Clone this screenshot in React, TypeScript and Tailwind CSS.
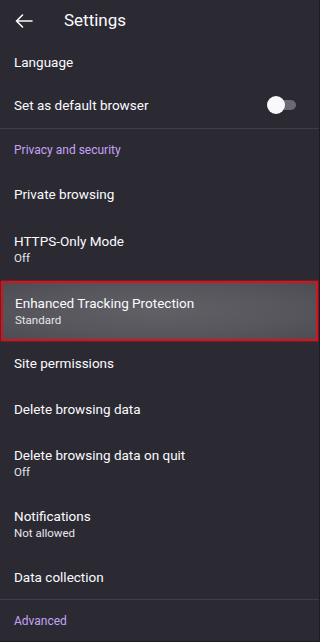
import React from "react";

const font = { fontFamily: "Roboto, 'Open Sans', sans-serif" };

function Row({ title, sub, h }: { title: string; sub?: string; h: string }) {
  return (
    <div className={`flex flex-col justify-center px-[14px] ${h}`}>
      <div className="text-[13.5px] leading-[16px] text-[#fbfbfe]">{title}</div>
      {sub && <div className="text-[11.5px] leading-[14px] text-[#e6e6ea] mt-[2px]">{sub}</div>}
    </div>
  );
}

export default function App() {
  return (
    <div className="w-[320px] h-[642px] bg-[#2b2a33] overflow-hidden flex flex-col border-r border-b border-[#1c1b22]" style={font}>
      <div className="h-[42px] flex items-center shrink-0">
        <svg width="18" height="14" viewBox="0 0 18 14" className="ml-[15px]" fill="none" stroke="#fbfbfe" strokeWidth="1.6" strokeLinecap="round" strokeLinejoin="round">
          <path d="M17 7H1.5M7.5 1L1.5 7l6 6" />
        </svg>
        <div className="ml-[31px] text-[17px] text-[#fbfbfe]">Settings</div>
      </div>
      <Row title="Language" h="h-[40px]" />
      <div className="h-[46px] flex items-center justify-between px-[14px]">
        <div className="text-[13.5px] text-[#fbfbfe]">Set as default browser</div>
        <div className="relative w-[29px] h-[18px] mr-[9px]">
          <div className="absolute right-0 top-[4px] w-[22px] h-[10px] rounded-full bg-[#6b6a72]" />
          <div className="absolute left-0 top-0 w-[18px] h-[18px] rounded-full bg-[#f9f9fb]" />
        </div>
      </div>
      <div className="h-px bg-[#403f48]" />
      <div className="h-[43px] flex items-center px-[14px] text-[12px] text-[#c5a3f5]">Privacy and security</div>
      <Row title="Private browsing" h="h-[46px]" />
      <Row title="HTTPS-Only Mode" sub="Off" h="h-[64px]" />
      <div className="mx-px h-[60px] border-2 border-[#d4141c] bg-[radial-gradient(ellipse_at_center,#606066_0%,#56565c_60%,#4c4c52_100%)] flex flex-col justify-center px-[12px] shadow-[0_0_2px_#d4141c]">
        <div className="text-[13.5px] leading-[16px] text-[#fbfbfe]">Enhanced Tracking Protection</div>
        <div className="text-[11.5px] leading-[14px] text-[#e6e6ea] mt-[2px]">Standard</div>
      </div>
      <Row title="Site permissions" h="h-[44px]" />
      <Row title="Delete browsing data" h="h-[48px]" />
      <Row title="Delete browsing data on quit" sub="Off" h="h-[60px]" />
      <Row title="Notifications" sub="Not allowed" h="h-[63px]" />
      <Row title="Data collection" h="h-[44px]" />
      <div className="h-px bg-[#403f48]" />
      <div className="h-[41px] flex items-center px-[14px] text-[12px] text-[#c5a3f5]">Advanced</div>
    </div>
  );
}
